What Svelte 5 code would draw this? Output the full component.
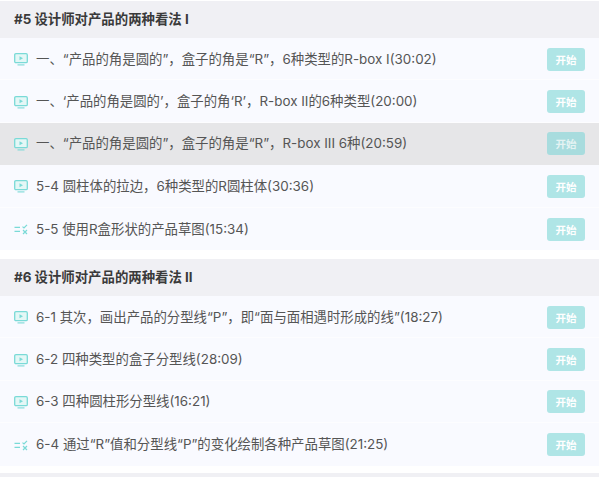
<script>
  const chapters = [
    {
      title: '#5 设计师对产品的两种看法 I',
      lessons: [
        { type: 'video', text: '一、“产品的角是圆的”，盒子的角是“R”，6种类型的R-box I(30:02)' },
        { type: 'video', text: '一、‘产品的角是圆的’，盒子的角‘R’，R-box II的6种类型(20:00)' },
        { type: 'video', text: '一、“产品的角是圆的”，盒子的角是“R”，R-box III 6种(20:59)', active: true },
        { type: 'video', text: '5-4 圆柱体的拉边，6种类型的R圆柱体(30:36)' },
        { type: 'quiz', text: '5-5 使用R盒形状的产品草图(15:34)' }
      ]
    },
    {
      title: '#6 设计师对产品的两种看法 II',
      lessons: [
        { type: 'video', text: '6-1 其次，画出产品的分型线“P”，即“面与面相遇时形成的线”(18:27)' },
        { type: 'video', text: '6-2 四种类型的盒子分型线(28:09)' },
        { type: 'video', text: '6-3 四种圆柱形分型线(16:21)' },
        { type: 'quiz', text: '6-4 通过“R”值和分型线“P”的变化绘制各种产品草图(21:25)' }
      ]
    }
  ];
</script>

<div class="course-list">
  {#each chapters as chapter (chapter.title)}
    <section class="chapter">
      <h2>{chapter.title}</h2>
      <ul>
        {#each chapter.lessons as lesson (lesson.text)}
          <li class:active={lesson.active}>
            {#if lesson.type === 'video'}
              <svg class="icon" viewBox="0 0 14 14" width="14" height="14" aria-hidden="true">
                <rect x="0.7" y="1.7" width="12.6" height="9" rx="1.2" fill="#e4f7f6" stroke="#7adad7" stroke-width="1.3" />
                <path d="M5.5 4.2 L9 6.2 L5.5 8.2 Z" fill="#7adad7" />
                <path d="M3.5 12.9 H10.5" stroke="#7adad7" stroke-width="1.1" />
              </svg>
            {:else}
              <svg class="icon" viewBox="0 0 14 14" width="14" height="14" aria-hidden="true">
                <path d="M0.5 5.4 H6 M0.5 9.4 H6" stroke="#7adad7" stroke-width="1.2" fill="none" />
                <path d="M8.5 4.6 L10 6 L13 2.8 M9 8 L13 12 M13 8 L9 12" stroke="#7adad7" stroke-width="1.2" fill="none" />
              </svg>
            {/if}
            <span class="name">{lesson.text}</span>
            <button type="button">开始</button>
          </li>
        {/each}
      </ul>
    </section>
  {/each}
  <div class="next-chapter"></div>
</div>

<style>
  :global(body) {
    margin: 0;
    background: #fff;
  }

  .course-list {
    height: 477px;
    overflow: hidden;
    padding-top: 1px;
    padding-right: 1px;
    box-sizing: border-box;
    font-family: Inter, "Noto Sans CJK SC", sans-serif;
  }

  .chapter {
    margin-bottom: 9px;
  }

  .chapter:nth-child(2) {
    margin-bottom: 7px;
  }

  h2 {
    margin: 0;
    height: 37px;
    padding-left: 14px;
    background: #f0f0f4;
    color: #3a3a3a;
    font-size: 13.4px;
    font-weight: 700;
    line-height: 36px;
  }

  ul {
    margin: 0;
    padding: 0;
    list-style: none;
  }

  li {
    display: flex;
    align-items: center;
    height: 42.4px;
    padding: 1px 14px 0;
    background: #f9faff;
    border-bottom: 1px solid #fdfdff;
    box-sizing: border-box;
  }

  li:last-child {
    border-bottom: 0;
  }

  li.active {
    background: #e6e6e8;
    border-bottom-color: #e6e6e8;
  }

  .icon {
    flex: none;
    margin-right: 8px;
  }

  .name {
    flex: 1;
    min-width: 0;
    margin-bottom: 3px;
    color: #555;
    font-size: 13.4px;
    white-space: nowrap;
  }

  button {
    flex: none;
    width: 38px;
    height: 23px;
    padding: 0;
    border: 0;
    border-radius: 3px;
    background: #afe5e6;
    color: #fff;
    font-family: inherit;
    font-size: 10.5px;
    font-weight: 700;
  }

  li.active button {
    background: #a8dcde;
    color: #e4f3f3;
  }

  .next-chapter {
    height: 37px;
    background: #f0f0f4;
  }
</style>
